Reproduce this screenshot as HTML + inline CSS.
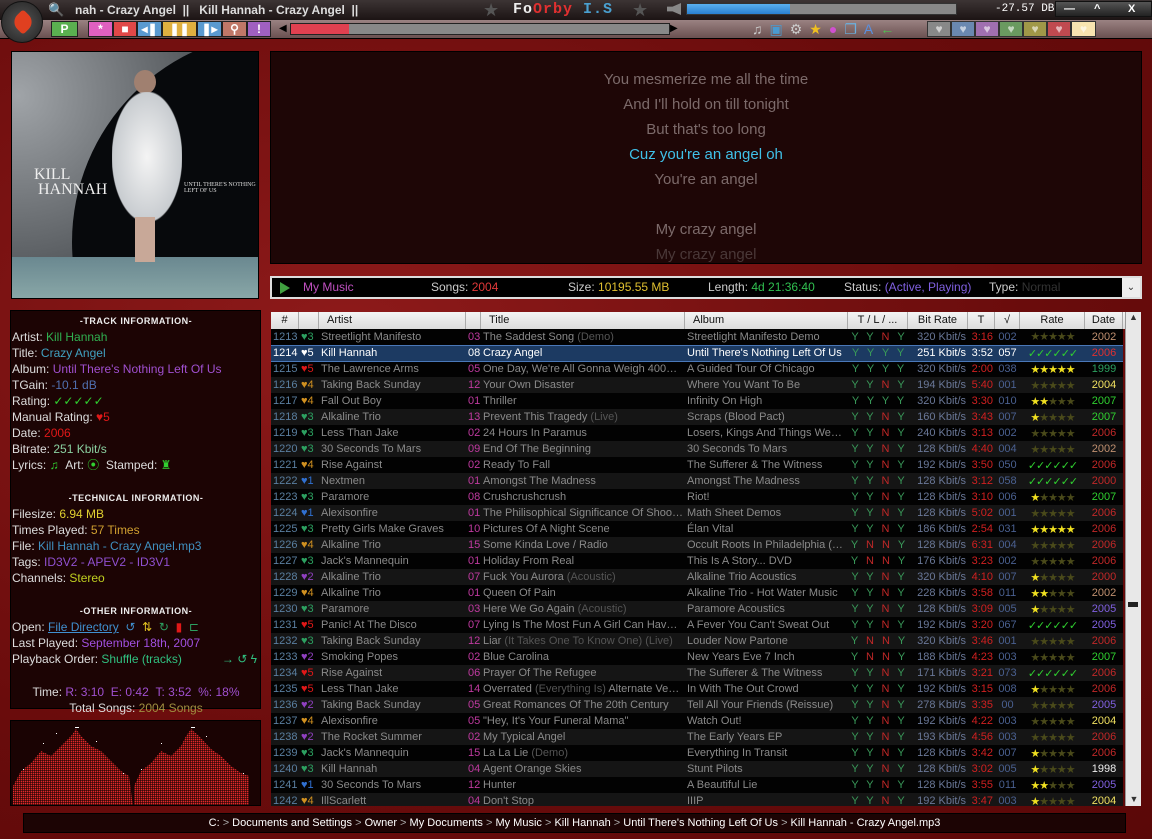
<!DOCTYPE html>
<html><head><meta charset="utf-8"><style>
*{margin:0;padding:0;box-sizing:border-box}
body{width:1152px;height:839px;overflow:hidden;background:#7a1010;font-family:"Liberation Sans",sans-serif;position:relative}
.bg{position:absolute;inset:0;background:radial-gradient(ellipse at 30% 40%,#8e1a1a,#6a0c0c 60%,#5a0808)}
.top1{position:absolute;left:0;top:0;width:1152px;height:20px;background:linear-gradient(#3c3434,#1c1414)}
.top2{position:absolute;left:0;top:20px;width:1152px;height:19px;background:linear-gradient(#9a8282,#6a5050);border-bottom:1px solid #000}
.logo{position:absolute;left:1px;top:1px;width:42px;height:42px;border-radius:50%;background:radial-gradient(#555,#222);border:1px solid #111}
.abs{position:absolute}
.btn{position:absolute;top:21px;height:16px;border:1px solid #222;color:#fff;font-weight:bold;font-size:12px;text-align:center;line-height:14px}
.heart{position:absolute;top:21px;width:24px;height:16px;border:1px solid #333;color:rgba(255,255,255,.6);font-size:12px;text-align:center;line-height:15px}
.panel{position:absolute;background:#1c0505;border:1px solid #000}
.info{font-size:12px;color:#ddd;line-height:16px}
.info .h{text-align:center;font-weight:bold;font-size:9px;letter-spacing:.5px;color:#eee}
table{border-collapse:collapse;table-layout:fixed;font-size:11px;white-space:nowrap}
td{height:16px;overflow:hidden;color:#8a8a8a;padding:0 2px}
tr:nth-child(even) td{background:#151515}
tr:nth-child(odd) td{background:#020202}
td:nth-child(1){color:#5a7fa0;text-align:right}
td:nth-child(3),td:nth-child(5),td:nth-child(6){color:#8a8a8a}
td:nth-child(4){color:#c03aa0;text-align:right}
td:nth-child(7){color:#3a9a5a;word-spacing:5px;text-align:center}
td:nth-child(8){color:#6a7898;text-align:right}
td:nth-child(9){color:#d02020;text-align:right}
td:nth-child(10){color:#4a6090;text-align:center}
td:nth-child(11){color:#4a4a1a;text-align:center;letter-spacing:-1px}
td:nth-child(12){text-align:center}
.n,td.n{color:#c02828}.y,td.y{color:#f0e020}.ck,td.ck{color:#30d030}.d{color:#555}
.g,td.g{color:#2ca060}.r,td.r{color:#e01818}.o,td.o{color:#d09020}.b,td.b{color:#3070d0}.p,td.p{color:#9040c0}
tr.sel td{background:#1c3a62!important;color:#fff!important;border-top:1px solid #4a78b8;border-bottom:1px solid #4a78b8}
.hd{position:absolute;left:271px;top:312px;height:17px;background:linear-gradient(#f4f4f4,#dcdcdc);font-size:11px;color:#111}
.hd div{position:absolute;top:0;height:17px;line-height:17px;border-right:1px solid #aaa;text-align:center}
</style></head><body>
<div class="bg"></div>
<div class="top1"></div><div class="top2"></div>
<div class="logo"><div class="abs" style="left:12px;top:11px;width:18px;height:18px;background:#e04020;transform:rotate(45deg);border-radius:3px 10px"></div></div>
<div class="abs" style="left:48px;top:2px;color:#9ac;font-size:13px">&#128269;</div>
<div class="abs" style="left:75px;top:3px;color:#ddd;font-size:12px;font-weight:bold">nah - Crazy Angel &nbsp;|| &nbsp;&nbsp;Kill Hannah - Crazy Angel &nbsp;||</div>
<div class="abs" style="left:483px;top:0px;color:#555;font-size:18px">★</div>
<div class="abs" style="left:513px;top:1px;font-size:15px;font-family:'Liberation Mono';font-weight:bold;letter-spacing:1px"><span style="color:#eee">Fo</span><span style="color:#e03030">Orby</span><span style="color:#4aa0d0"> I.S</span></div>
<div class="abs" style="left:632px;top:0px;color:#555;font-size:18px">★</div>
<div class="abs" style="left:667px;top:3px;width:14px;height:12px;background:#888;clip-path:polygon(0 30%,40% 30%,100% 0,100% 100%,40% 70%,0 70%)"></div>
<div class="abs" style="left:686px;top:3px;width:271px;height:12px;background:#888;border:1px solid #333"><div style="width:103px;height:10px;background:linear-gradient(#5ab0f0,#2a80d0)"></div></div>
<div class="abs" style="left:995px;top:3px;color:#fff;font-size:11px;font-family:'Liberation Mono'">-27.57 DB</div>
<div class="abs" style="left:1055px;top:1px;width:97px;height:16px;background:linear-gradient(#555,#222);border:1px solid #111;color:#fff;font-size:11px;font-weight:bold;line-height:14px"><span style="position:absolute;left:8px">—</span><span style="position:absolute;left:38px">^</span><span style="position:absolute;left:72px">X</span></div>
<div class="btn" style="left:51px;width:27px;background:#5ab050">P</div>
<div class="btn" style="left:88px;width:25px;background:#e060c0">*</div>
<div class="btn" style="left:113px;width:24px;background:#e04848">■</div>
<div class="btn" style="left:137px;width:25px;background:#5a9ad0">◂❚</div>
<div class="btn" style="left:162px;width:35px;background:#e0b040">❚❚</div>
<div class="btn" style="left:197px;width:25px;background:#5a9ad0">❚▸</div>
<div class="btn" style="left:222px;width:25px;background:#c07868">&#9906;</div>
<div class="btn" style="left:247px;width:24px;background:#a060c0">!</div>
<div class="abs" style="left:279px;top:23px;font-size:10px;color:#000">◀</div>
<div class="abs" style="left:290px;top:23px;width:380px;height:12px;background:#888;border:1px solid #222"><div style="width:58px;height:10px;background:#e04050"></div></div>
<div class="abs" style="left:670px;top:23px;font-size:10px;color:#000">▶</div>
<div class="abs" style="left:752px;top:21px;font-size:14px;color:#ccc;letter-spacing:7px">♫<span style="color:#4a9ad0">▣</span><span style="color:#ccc">⚙</span><span style="color:#f0c020">★</span><span style="color:#d050d0">●</span><span style="color:#6ab0e0">❐</span><span style="color:#5a90e0">A</span><span style="color:#50c050">←</span></div>
<div class="heart" style="left:927px;background:#888">♥</div><div class="heart" style="left:951px;background:#6a88b0">♥</div><div class="heart" style="left:975px;background:#a070b0">♥</div><div class="heart" style="left:999px;background:#6a9a60">♥</div><div class="heart" style="left:1023px;background:#a09848">♥</div><div class="heart" style="left:1047px;background:#c04a50">♥</div><div class="heart" style="left:1071px;width:25px;background:#f8e4b0">♥</div>

<div class="abs" style="left:11px;top:51px;width:248px;height:248px;border:1px solid #000;overflow:hidden;background:#07090c">
<div class="abs" style="left:-120px;top:-40px;width:420px;height:420px;border-radius:50%;background:radial-gradient(circle at 30% 20%,#a0a4a8,#303438 60%,#0a0c10 70%)"></div>
<div class="abs" style="left:60px;top:-20px;width:420px;height:420px;border-radius:50%;background:#07090c"></div>
<div class="abs" style="left:0;top:205px;width:248px;height:43px;background:linear-gradient(#6a8890,#8aa8a8)"></div>
<div class="abs" style="left:122px;top:18px;width:22px;height:24px;border-radius:50%;background:#a08070"></div>
<div class="abs" style="left:100px;top:40px;width:70px;height:130px;background:radial-gradient(ellipse,#f4f4f4,#c8ccd0 70%,transparent 72%)"></div>
<div class="abs" style="left:123px;top:165px;width:20px;height:45px;background:#c8a898"></div>
<div class="abs" style="left:22px;top:115px;color:#eee;font-family:'Liberation Serif';font-size:16px;line-height:15px">KILL<br>&nbsp;HANNAH</div>
<div class="abs" style="left:172px;top:130px;color:#ddd;font-family:'Liberation Serif';font-size:6px">UNTIL THERE'S NOTHING<br>LEFT OF US</div>
</div>

<div class="panel" style="left:270px;top:51px;width:872px;height:213px;background:#1e0606;overflow:hidden;text-align:center;color:#7c6a6a;font-size:15px;line-height:25px;padding-top:15px">
You mesmerize me all the time<br>And I'll hold on till tonight<br>But that's too long<br><span style="color:#40c0e8">Cuz you're an angel oh</span><br>You're an angel<br>&nbsp;<br>My crazy angel<br><span style="color:#4a3838">My crazy angel</span></div>

<div class="abs" style="left:270px;top:276px;width:872px;height:23px;background:#000;border:2px solid #ddd;font-size:12px;color:#ccc;line-height:19px">
<span class="abs" style="left:8px;top:4px;width:10px;height:12px;background:#40a040;clip-path:polygon(0 0,100% 50%,0 100%)"></span>
<span class="abs" style="left:31px;color:#c050c0">My Music</span>
<span class="abs" style="left:159px">Songs: <span style="color:#e03838">2004</span></span>
<span class="abs" style="left:296px">Size: <span style="color:#e0c030">10195.55 MB</span></span>
<span class="abs" style="left:436px">Length: <span style="color:#30c050">4d 21:36:40</span></span>
<span class="abs" style="left:572px">Status: <span style="color:#8060e0">(Active, Playing)</span></span>
<span class="abs" style="left:717px">Type: <span style="color:#333">Normal</span></span>
<span class="abs" style="left:850px;top:0;width:18px;height:19px;background:#eee;color:#333;text-align:center;font-size:10px">⌄</span>
</div>

<div class="panel info" style="left:10px;top:310px;width:251px;height:399px;padding:2px 0 0 1px;background:#1c0404">
<div class="h">-TRACK INFORMATION-</div>
<div>Artist: <span style="color:#30b050">Kill Hannah</span></div>
<div>Title: <span style="color:#40a0c0">Crazy Angel</span></div>
<div>Album: <span style="color:#a050d0">Until There's Nothing Left Of Us</span></div>
<div>TGain: <span style="color:#5070b0">-10.1 dB</span></div>
<div>Rating: <span class="ck">✓✓✓✓✓</span></div>
<div>Manual Rating: <span class="r">♥5</span></div>
<div>Date: <span class="r">2006</span></div>
<div>Bitrate: <span style="color:#8ad0a0">251 Kbit/s</span></div>
<div>Lyrics: <span class="ck">♫</span> &nbsp;Art: <span class="ck">⦿</span> &nbsp;Stamped: <span class="ck">♜</span></div>
<div style="height:17px"></div>
<div class="h">-TECHNICAL INFORMATION-</div>
<div>Filesize: <span style="color:#e0d030">6.94 MB</span></div>
<div>Times Played: <span style="color:#d0a030">57 Times</span></div>
<div>File: <span style="color:#4090c0">Kill Hannah - Crazy Angel.mp3</span></div>
<div>Tags: <span style="color:#9050d0">ID3V2 - APEV2 - ID3V1</span></div>
<div>Channels: <span style="color:#c0d020">Stereo</span></div>
<div style="height:17px"></div>
<div class="h">-OTHER INFORMATION-</div>
<div>Open: <span style="color:#4090d0;text-decoration:underline">File Directory</span> &nbsp;<span style="color:#4090d0">↺</span> &nbsp;<span style="color:#e0c020">⇅</span> &nbsp;<span class="g">↻</span> &nbsp;<span class="r">▮</span> &nbsp;<span class="g">⊏</span></div>
<div>Last Played: <span style="color:#a050e0">September 18th, 2007</span></div>
<div>Playback Order: <span style="color:#30c080">Shuffle (tracks)</span> <span style="float:right;margin-right:3px;color:#30c080">→ ↺ ϟ</span></div>
<div style="height:17px"></div>
<div style="text-align:center">Time: <span style="color:#a050d0">R: 3:10 &nbsp;E: 0:42 &nbsp;T: 3:52 &nbsp;%: 18%</span></div>
<div style="text-align:center">Total Songs: <span style="color:#a09040">2004 Songs</span></div>
</div>

<div class="panel" style="left:10px;top:720px;width:251px;height:86px;overflow:hidden;background:#1a0303">
<svg width="251" height="86"><defs><pattern id="dt" width="2" height="2" patternUnits="userSpaceOnUse"><rect width="1.4" height="1.4" fill="#e02828"/></pattern></defs>
<polygon fill="url(#dt)" points="2,86 2,65 10,50 20,42 30,30 40,35 50,25 60,15 65,8 70,15 80,25 90,30 100,40 110,50 118,55 122,86"/>
<polygon fill="url(#dt)" points="123,86 123,65 130,50 140,42 150,30 160,35 170,25 175,15 180,8 188,15 200,28 210,35 220,45 230,52 238,55 238,86"/>
<g fill="#fff"><rect x="64" y="6" width="4" height="1"/><rect x="180" y="6" width="4" height="1"/><rect x="32" y="22" width="1" height="1"/><rect x="45" y="12" width="1" height="1"/><rect x="85" y="20" width="1" height="1"/><rect x="150" y="22" width="1" height="1"/><rect x="195" y="15" width="1" height="1"/><rect x="12" y="48" width="1" height="1"/><rect x="130" y="48" width="1" height="1"/><rect x="112" y="52" width="1" height="1"/><rect x="232" y="52" width="1" height="1"/></g>
</svg></div>

<div class="hd" style="width:854px">
<div style="left:0;width:28px">#</div><div style="left:28px;width:20px"></div><div style="left:48px;width:147px;text-align:left;padding-left:8px">Artist</div><div style="left:195px;width:15px"></div><div style="left:210px;width:204px;text-align:left;padding-left:8px">Title</div><div style="left:414px;width:163px;text-align:left;padding-left:8px">Album</div><div style="left:577px;width:60px">T / L / ...</div><div style="left:637px;width:60px">Bit Rate</div><div style="left:697px;width:27px">T</div><div style="left:724px;width:25px">√</div><div style="left:749px;width:65px">Rate</div><div style="left:814px;width:38px">Date</div>
</div>
<div class="abs" style="left:1125px;top:312px;width:16px;height:494px;background:#e8e8e8;border-left:1px solid #999"><div style="text-align:center;font-size:9px;color:#333">▲</div><div class="abs" style="left:2px;top:290px;width:10px;height:5px;background:#222"></div><div class="abs" style="bottom:2px;width:16px;text-align:center;font-size:9px;color:#333">▼</div></div>

<div class="abs" style="left:271px;top:329px;width:854px;height:477px;overflow:hidden">
<table style="width:852px">
<colgroup><col style="width:28px"><col style="width:20px"><col style="width:147px"><col style="width:15px"><col style="width:204px"><col style="width:163px"><col style="width:60px"><col style="width:60px"><col style="width:27px"><col style="width:25px"><col style="width:65px"><col style="width:38px"></colgroup>
<tr><td>1213</td><td class="g">♥3</td><td>Streetlight Manifesto</td><td>03</td><td>The Saddest Song <span class="d">(Demo)</span></td><td>Streetlight Manifesto Demo</td><td>Y Y <span class="n">N</span> Y</td><td>320 Kbit/s</td><td>3:16</td><td>002</td><td>★★★★★</td><td style="color:#c09070">2002</td></tr>
<tr class="sel"><td>1214</td><td class="r">♥5</td><td>Kill Hannah</td><td>08</td><td>Crazy Angel</td><td>Until There's Nothing Left Of Us</td><td style="color:#3a9a5a!important">Y Y Y Y</td><td>251 Kbit/s</td><td>3:52</td><td>057</td><td style="color:#30d030!important">✓✓✓✓✓✓</td><td style="color:#e03030!important">2006</td></tr>
<tr><td>1215</td><td class="r">♥5</td><td>The Lawrence Arms</td><td>05</td><td>One Day, We're All Gonna Weigh 400…</td><td>A Guided Tour Of Chicago</td><td>Y Y Y Y</td><td>320 Kbit/s</td><td>2:00</td><td>038</td><td class="y">★★★★★</td><td class="g">1999</td></tr>
<tr><td>1216</td><td class="o">♥4</td><td>Taking Back Sunday</td><td>12</td><td>Your Own Disaster</td><td>Where You Want To Be</td><td>Y Y <span class="n">N</span> Y</td><td>194 Kbit/s</td><td>5:40</td><td>001</td><td>★★★★★</td><td style="color:#f0e060">2004</td></tr>
<tr><td>1217</td><td class="o">♥4</td><td>Fall Out Boy</td><td>01</td><td>Thriller</td><td>Infinity On High</td><td>Y Y Y Y</td><td>320 Kbit/s</td><td>3:30</td><td>010</td><td><span class="y">★★</span>★★★</td><td class="ck">2007</td></tr>
<tr><td>1218</td><td class="g">♥3</td><td>Alkaline Trio</td><td>13</td><td>Prevent This Tragedy <span class="d">(Live)</span></td><td>Scraps (Blood Pact)</td><td>Y Y <span class="n">N</span> Y</td><td>160 Kbit/s</td><td>3:43</td><td>007</td><td><span class="y">★</span>★★★★</td><td class="ck">2007</td></tr>
<tr><td>1219</td><td class="g">♥3</td><td>Less Than Jake</td><td>02</td><td>24 Hours In Paramus</td><td>Losers, Kings And Things We…</td><td>Y Y <span class="n">N</span> Y</td><td>240 Kbit/s</td><td>3:13</td><td>002</td><td>★★★★★</td><td class="n">2006</td></tr>
<tr><td>1220</td><td class="g">♥3</td><td>30 Seconds To Mars</td><td>09</td><td>End Of The Beginning</td><td>30 Seconds To Mars</td><td>Y Y <span class="n">N</span> Y</td><td>128 Kbit/s</td><td>4:40</td><td>004</td><td>★★★★★</td><td style="color:#c09070">2002</td></tr>
<tr><td>1221</td><td class="o">♥4</td><td>Rise Against</td><td>02</td><td>Ready To Fall</td><td>The Sufferer &amp; The Witness</td><td>Y Y <span class="n">N</span> Y</td><td>192 Kbit/s</td><td>3:50</td><td>050</td><td class="ck">✓✓✓✓✓✓</td><td class="n">2006</td></tr>
<tr><td>1222</td><td class="b">♥1</td><td>Nextmen</td><td>01</td><td>Amongst The Madness</td><td>Amongst The Madness</td><td>Y Y <span class="n">N</span> Y</td><td>128 Kbit/s</td><td>3:12</td><td>058</td><td class="ck">✓✓✓✓✓✓</td><td class="n">2000</td></tr>
<tr><td>1223</td><td class="g">♥3</td><td>Paramore</td><td>08</td><td>Crushcrushcrush</td><td>Riot!</td><td>Y Y <span class="n">N</span> Y</td><td>128 Kbit/s</td><td>3:10</td><td>006</td><td><span class="y">★</span>★★★★</td><td class="ck">2007</td></tr>
<tr><td>1224</td><td class="b">♥1</td><td>Alexisonfire</td><td>01</td><td>The Philisophical Significance Of Shoo…</td><td>Math Sheet Demos</td><td>Y Y <span class="n">N</span> Y</td><td>128 Kbit/s</td><td>5:02</td><td>001</td><td>★★★★★</td><td class="n">2006</td></tr>
<tr><td>1225</td><td class="g">♥3</td><td>Pretty Girls Make Graves</td><td>10</td><td>Pictures Of A Night Scene</td><td>Élan Vital</td><td>Y Y <span class="n">N</span> Y</td><td>186 Kbit/s</td><td>2:54</td><td>031</td><td class="y">★★★★★</td><td class="n">2006</td></tr>
<tr><td>1226</td><td class="o">♥4</td><td>Alkaline Trio</td><td>15</td><td>Some Kinda Love / Radio</td><td>Occult Roots In Philadelphia (…</td><td>Y <span class="n">N N</span> Y</td><td>128 Kbit/s</td><td>6:31</td><td>004</td><td>★★★★★</td><td class="n">2006</td></tr>
<tr><td>1227</td><td class="g">♥3</td><td>Jack's Mannequin</td><td>01</td><td>Holiday From Real</td><td>This Is A Story... DVD</td><td>Y <span class="n">N N</span> Y</td><td>176 Kbit/s</td><td>3:23</td><td>002</td><td>★★★★★</td><td class="n">2006</td></tr>
<tr><td>1228</td><td class="p">♥2</td><td>Alkaline Trio</td><td>07</td><td>Fuck You Aurora <span class="d">(Acoustic)</span></td><td>Alkaline Trio Acoustics</td><td>Y Y <span class="n">N</span> Y</td><td>320 Kbit/s</td><td>4:10</td><td>007</td><td><span class="y">★</span>★★★★</td><td class="n">2000</td></tr>
<tr><td>1229</td><td class="o">♥4</td><td>Alkaline Trio</td><td>01</td><td>Queen Of Pain</td><td>Alkaline Trio - Hot Water Music</td><td>Y Y <span class="n">N</span> Y</td><td>228 Kbit/s</td><td>3:58</td><td>011</td><td><span class="y">★★</span>★★★</td><td style="color:#c09070">2002</td></tr>
<tr><td>1230</td><td class="g">♥3</td><td>Paramore</td><td>03</td><td>Here We Go Again <span class="d">(Acoustic)</span></td><td>Paramore Acoustics</td><td>Y Y <span class="n">N</span> Y</td><td>128 Kbit/s</td><td>3:09</td><td>005</td><td><span class="y">★</span>★★★★</td><td style="color:#8060e0">2005</td></tr>
<tr><td>1231</td><td class="r">♥5</td><td>Panic! At The Disco</td><td>07</td><td>Lying Is The Most Fun A Girl Can Hav…</td><td>A Fever You Can't Sweat Out</td><td>Y Y <span class="n">N</span> Y</td><td>192 Kbit/s</td><td>3:20</td><td>067</td><td class="ck">✓✓✓✓✓✓</td><td style="color:#8060e0">2005</td></tr>
<tr><td>1232</td><td class="g">♥3</td><td>Taking Back Sunday</td><td>12</td><td>Liar <span class="d">(It Takes One To Know One) (Live)</span></td><td>Louder Now Partone</td><td>Y <span class="n">N N</span> Y</td><td>320 Kbit/s</td><td>3:46</td><td>001</td><td>★★★★★</td><td class="n">2006</td></tr>
<tr><td>1233</td><td class="p">♥2</td><td>Smoking Popes</td><td>02</td><td>Blue Carolina</td><td>New Years Eve 7 Inch</td><td>Y <span class="n">N N</span> Y</td><td>188 Kbit/s</td><td>4:23</td><td>003</td><td>★★★★★</td><td class="ck">2007</td></tr>
<tr><td>1234</td><td class="r">♥5</td><td>Rise Against</td><td>06</td><td>Prayer Of The Refugee</td><td>The Sufferer &amp; The Witness</td><td>Y Y <span class="n">N</span> Y</td><td>171 Kbit/s</td><td>3:21</td><td>073</td><td class="ck">✓✓✓✓✓✓</td><td class="n">2006</td></tr>
<tr><td>1235</td><td class="r">♥5</td><td>Less Than Jake</td><td>14</td><td>Overrated <span class="d">(Everything Is)</span> Alternate Ve…</td><td>In With The Out Crowd</td><td>Y Y <span class="n">N</span> Y</td><td>192 Kbit/s</td><td>3:15</td><td>008</td><td><span class="y">★</span>★★★★</td><td class="n">2006</td></tr>
<tr><td>1236</td><td class="p">♥2</td><td>Taking Back Sunday</td><td>05</td><td>Great Romances Of The 20th Century</td><td>Tell All Your Friends (Reissue)</td><td>Y Y <span class="n">N</span> Y</td><td>278 Kbit/s</td><td>3:35</td><td>00</td><td>★★★★★</td><td style="color:#8060e0">2005</td></tr>
<tr><td>1237</td><td class="o">♥4</td><td>Alexisonfire</td><td>05</td><td>"Hey, It's Your Funeral Mama"</td><td>Watch Out!</td><td>Y Y <span class="n">N</span> Y</td><td>192 Kbit/s</td><td>4:22</td><td>003</td><td>★★★★★</td><td style="color:#f0e060">2004</td></tr>
<tr><td>1238</td><td class="p">♥2</td><td>The Rocket Summer</td><td>02</td><td>My Typical Angel</td><td>The Early Years EP</td><td>Y Y <span class="n">N</span> Y</td><td>193 Kbit/s</td><td>4:56</td><td>003</td><td>★★★★★</td><td class="n">2006</td></tr>
<tr><td>1239</td><td class="g">♥3</td><td>Jack's Mannequin</td><td>15</td><td>La La Lie <span class="d">(Demo)</span></td><td>Everything In Transit</td><td>Y Y <span class="n">N</span> Y</td><td>128 Kbit/s</td><td>3:42</td><td>007</td><td><span class="y">★</span>★★★★</td><td class="n">2006</td></tr>
<tr><td>1240</td><td class="g">♥3</td><td>Kill Hannah</td><td>04</td><td>Agent Orange Skies</td><td>Stunt Pilots</td><td>Y Y <span class="n">N</span> Y</td><td>128 Kbit/s</td><td>3:02</td><td>005</td><td><span class="y">★</span>★★★★</td><td style="color:#eee">1998</td></tr>
<tr><td>1241</td><td class="b">♥1</td><td>30 Seconds To Mars</td><td>12</td><td>Hunter</td><td>A Beautiful Lie</td><td>Y Y <span class="n">N</span> Y</td><td>128 Kbit/s</td><td>3:55</td><td>011</td><td><span class="y">★★</span>★★★</td><td style="color:#8060e0">2005</td></tr>
<tr><td>1242</td><td class="o">♥4</td><td>IllScarlett</td><td>04</td><td>Don't Stop</td><td>IIIP</td><td>Y Y <span class="n">N</span> Y</td><td>192 Kbit/s</td><td>3:47</td><td>003</td><td><span class="y">★</span>★★★★</td><td style="color:#f0e060">2004</td></tr>
</table></div>

<div class="abs" style="left:23px;top:813px;width:1103px;height:20px;background:#1c0404;border:1px solid #000;text-align:center;font-size:11px;line-height:19px;color:#fff">C: <span style="color:#aaa">&gt;</span> Documents and Settings <span style="color:#aaa">&gt;</span> Owner <span style="color:#aaa">&gt;</span> My Documents <span style="color:#aaa">&gt;</span> My Music <span style="color:#aaa">&gt;</span> Kill Hannah <span style="color:#aaa">&gt;</span> Until There's Nothing Left Of Us <span style="color:#aaa">&gt;</span> Kill Hannah - Crazy Angel.mp3</div>
</body></html>
